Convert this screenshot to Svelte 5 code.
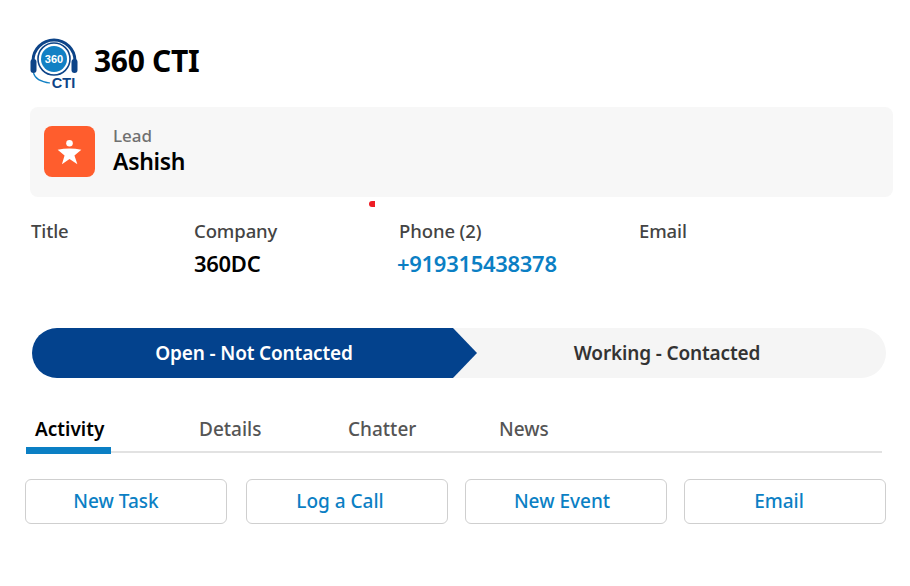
<script>
  const fields = [
    { label: "Title", value: "", width: 163 },
    { label: "Company", value: "360DC", width: 205 },
    { label: "Phone (2)", value: "+919315438378", width: 240, link: true },
    { label: "Email", value: "", width: 200 },
  ];
  const tabs = [
    { name: "Activity", width: 173, active: true },
    { name: "Details", width: 149 },
    { name: "Chatter", width: 151 },
    { name: "News", width: 100 },
  ];
  // labels sit a little left of the button centre in the reference
  const actions = [
    { name: "New Task", inset: 26 },
    { name: "Log a Call", inset: 20 },
    { name: "New Event", inset: 14 },
    { name: "Email", inset: 18 },
  ];
</script>

<div class="page">
  <header class="brand">
    <svg class="logo" viewBox="0 0 48 55" width="48" height="55" aria-hidden="true">
      <path d="M3 26 A21 21 0 0 1 45 26" fill="none" stroke="#0d4488" stroke-width="3" />
      <circle cx="24" cy="24" r="16" fill="none" stroke="#0d4488" stroke-width="1.6" />
      <circle cx="24" cy="24" r="13" fill="#1280c4" />
      <rect x="0.5" y="24" width="6" height="14" rx="3" fill="#0d4488" />
      <rect x="41.5" y="24" width="6" height="14" rx="3" fill="#0d4488" />
      <path d="M3.5 38 C5 44 12 47 20 48" fill="none" stroke="#1280c4" stroke-width="1.2" />
      <text class="logo-num" x="24" y="28" text-anchor="middle">360</text>
      <text class="logo-cti" x="33.5" y="53" text-anchor="middle">CTI</text>
    </svg>
    <h1>360 CTI</h1>
  </header>

  <section class="record">
    <div class="record-icon">
      <svg viewBox="60 60 82 85" width="27" height="28" aria-hidden="true">
        <circle cx="101" cy="76" r="10" fill="#fff" />
        <path d="M65 96 Q101 88 137 96 L116 113 L125 140 L101 124 L78 140 L86 113 Z" fill="#fff" />
      </svg>
    </div>
    <div class="record-text">
      <span class="record-type">Lead</span>
      <span class="record-name">Ashish</span>
    </div>
  </section>
  <span class="red-mark"></span>

  <section class="fields">
    {#each fields as f}
      <div class="field" style="width: {f.width}px">
        <div class="field-label">{f.label}</div>
        <div class="field-value" class:link={f.link}>{f.value}</div>
      </div>
    {/each}
  </section>

  <section class="path">
    <div class="step current">Open - Not Contacted</div>
    <div class="step next">Working - Contacted</div>
  </section>

  <nav class="tabs">
    {#each tabs as t}
      <div class="tab" class:active={t.active} style="width: {t.width}px">{t.name}</div>
    {/each}
  </nav>

  <section class="actions">
    {#each actions as a}
      <button type="button" style="padding-right: {a.inset}px">{a.name}</button>
    {/each}
  </section>
</div>

<style>
  :global(body) {
    background: #fff;
  }

  .page {
    position: relative;
    width: 910px;
    height: 586px;
    box-sizing: border-box;
    padding: 35px 17px 0 30px;
    font-family: "Noto Sans", "Open Sans", sans-serif;
    overflow: hidden;
  }

  .brand {
    display: flex;
    align-items: center;
    gap: 16px;
    height: 55px;
  }
  .logo {
    flex: none;
  }
  .logo-num {
    font: 700 11px "Liberation Sans", sans-serif;
    fill: #fff;
  }
  .logo-cti {
    font: 700 14.5px "Liberation Sans", sans-serif;
    fill: #0d4488;
  }
  h1 {
    margin: -5px 0 0;
    font-size: 30px;
    font-weight: 700;
    letter-spacing: -0.3px;
    color: #000;
  }

  .record {
    display: flex;
    align-items: center;
    gap: 18px;
    height: 90px;
    margin-top: 17px;
    padding-left: 14px;
    background: #f7f7f7;
    border-radius: 8px;
  }
  .record-icon {
    display: flex;
    align-items: center;
    justify-content: center;
    width: 51px;
    height: 51px;
    margin-top: -1px;
    background: #ff5d2d;
    border-radius: 8px;
  }
  .record-text {
    display: flex;
    flex-direction: column;
    margin-top: -2px;
  }
  .record-type {
    font-size: 17px;
    line-height: 20px;
    font-weight: 500;
    color: #707070;
  }
  .record-name {
    font-size: 23px;
    line-height: 30px;
    font-weight: 600;
    letter-spacing: -0.3px;
    color: #000;
  }

  .red-mark {
    position: absolute;
    left: 369px;
    top: 201px;
    width: 6px;
    height: 6px;
    border-radius: 3px 0 0 3px;
    background: #ee1c25;
  }

  .fields {
    display: flex;
    margin-top: 21px;
    padding-left: 1px;
  }
  .field-label {
    font-size: 18.5px;
    line-height: 26px;
    font-weight: 500;
    color: #444;
    letter-spacing: -0.1px;
  }
  .field-value {
    height: 34px;
    margin-top: 2px;
    font-size: 22px;
    line-height: 34px;
    font-weight: 600;
    letter-spacing: -0.3px;
    color: #000;
  }
  .field-value.link {
    color: #0b7fc4;
    margin-left: -2px;
  }

  .path {
    display: flex;
    margin-top: 48px;
    margin-left: 2px;
    width: 854px;
    height: 50px;
  }
  .step {
    display: flex;
    align-items: center;
    justify-content: center;
    font-size: 19px;
    font-weight: 600;
    letter-spacing: -0.15px;
  }
  .step.current {
    box-sizing: border-box;
    width: 445px;
    padding-right: 1px;
    background: #03428d;
    color: #fff;
    border-radius: 25px 0 0 25px;
    clip-path: polygon(0 0, 421px 0, 100% 50%, 421px 100%, 0 100%);
    z-index: 1;
  }
  .step.next {
    flex: 1;
    margin-left: -24px;
    padding-right: 5px;
    background: #f5f5f5;
    color: #333;
    border-radius: 0 25px 25px 0;
  }

  .tabs {
    display: flex;
    margin: 33px 11px 0 -4px;
    height: 40px;
    border-bottom: 2px solid #e2e2e2;
  }
  .tab {
    box-sizing: border-box;
    padding-top: 5px;
    font-size: 19px;
    line-height: 26px;
    font-weight: 500;
    color: #555;
  }
  .tab.active {
    position: relative;
    padding-left: 9px;
    color: #000;
    font-weight: 600;
  }
  .tab.active::after {
    content: "";
    position: absolute;
    left: 0;
    bottom: -3px;
    width: 85px;
    height: 7px;
    background: #0b7fc4;
  }

  .actions {
    display: grid;
    grid-template-columns: 204px repeat(3, 202px);
    column-gap: 17px;
    margin: 26px 0 0 -5px;
  }
  button {
    width: 202px;
    height: 45px;
    padding-bottom: 3px;
    background: #fff;
    border: 1px solid #cfcfcf;
    border-radius: 6px;
    color: #0b7fc4;
    font-family: inherit;
    font-size: 19px;
    font-weight: 500;
  }
</style>
